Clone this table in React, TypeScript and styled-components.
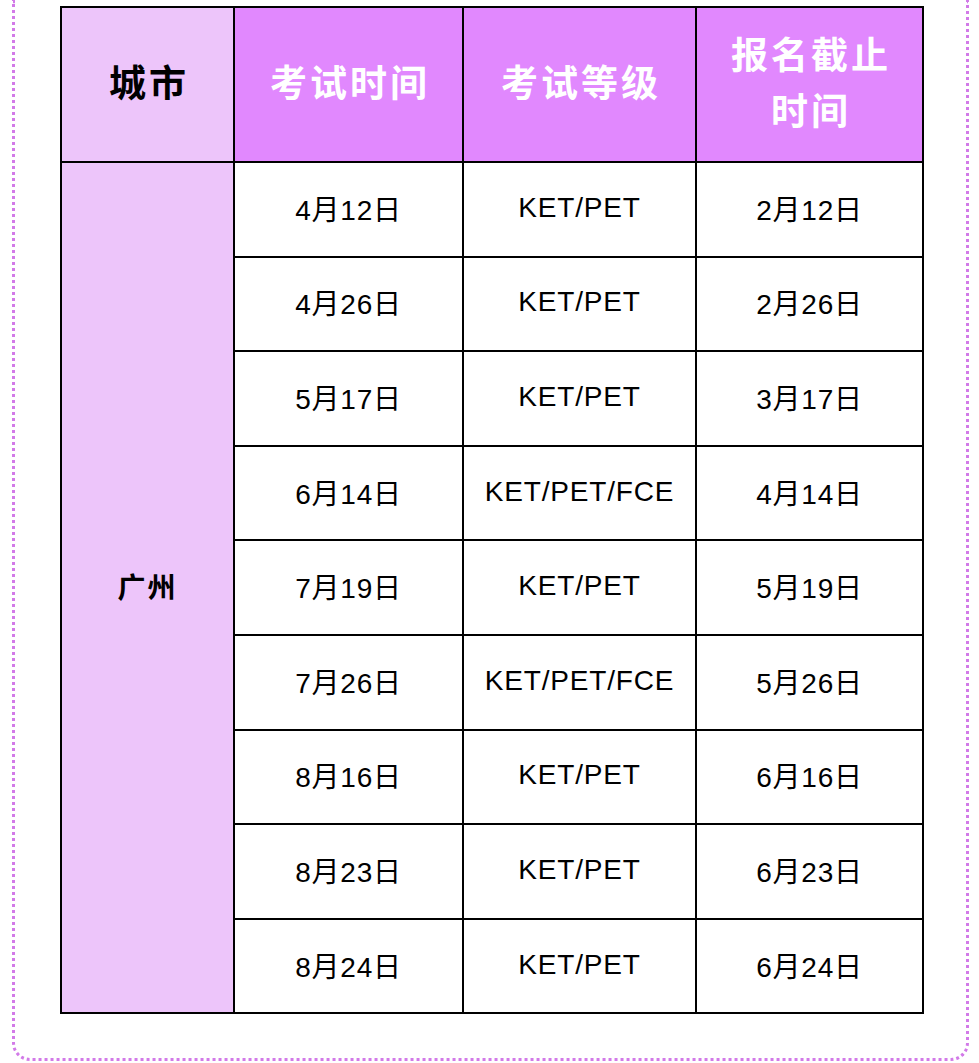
import React from "react";
import styled, { createGlobalStyle } from "styled-components";

const Global = createGlobalStyle`
  html, body { margin: 0; padding: 0; background: #ffffff; }
  body { font-family: "Liberation Sans", "Noto Sans CJK SC", Arial, sans-serif; }
`;

const Frame = styled.div`
  margin: 0 10px 0 12px;
  height: 1061px;
  box-sizing: border-box;
  border: 3px dotted #d27ae8;
  border-top: none;
  border-radius: 0 0 18px 18px;
  padding: 6px 44px 0 45px;
`;

const Table = styled.table`
  width: 862px;
  border-collapse: collapse;
  table-layout: fixed;
  border: 2px solid #000;
`;

const HeadRow = styled.tr`
  height: 155px;
`;

const BodyRow = styled.tr`
  height: 94.6px;
`;

const HeadCell = styled.th<{ $light?: boolean }>`
  border: 2px solid #000;
  background: ${(p) => (p.$light ? "#edc5fa" : "#e188fe")};
  color: ${(p) => (p.$light ? "#000" : "#fff")};
  font-size: 37px;
  font-weight: 700;
  letter-spacing: 3px;
  line-height: 56px;
  text-align: center;
  vertical-align: middle;
  padding: 0 0 0 3px;
`;

const CityCell = styled.td`
  border: 2px solid #000;
  background: #edc5fa;
  font-size: 28px;
  font-weight: 700;
  letter-spacing: 2px;
  text-align: center;
  vertical-align: middle;
  padding: 0 0 4px;
  color: #000;
`;

const Cell = styled.td`
  border: 2px solid #000;
  background: #fff;
  font-size: 28px;
  letter-spacing: 0.8px;
  text-align: center;
  vertical-align: middle;
  padding: 0 0 3px;
  color: #000;
`;

const rows = [
  ["4月12日", "KET/PET", "2月12日"],
  ["4月26日", "KET/PET", "2月26日"],
  ["5月17日", "KET/PET", "3月17日"],
  ["6月14日", "KET/PET/FCE", "4月14日"],
  ["7月19日", "KET/PET", "5月19日"],
  ["7月26日", "KET/PET/FCE", "5月26日"],
  ["8月16日", "KET/PET", "6月16日"],
  ["8月23日", "KET/PET", "6月23日"],
  ["8月24日", "KET/PET", "6月24日"],
];

export default function App() {
  return (
    <>
      <Global />
      <Frame>
        <Table>
          <colgroup>
            <col style={{ width: 173 }} />
            <col style={{ width: 229 }} />
            <col style={{ width: 233 }} />
            <col style={{ width: 227 }} />
          </colgroup>
          <thead>
            <HeadRow>
              <HeadCell $light>城市</HeadCell>
              <HeadCell>考试时间</HeadCell>
              <HeadCell>考试等级</HeadCell>
              <HeadCell>
                报名截止
                <br />
                时间
              </HeadCell>
            </HeadRow>
          </thead>
          <tbody>
            {rows.map((r, i) => (
              <BodyRow key={i}>
                {i === 0 && <CityCell rowSpan={rows.length}>广州</CityCell>}
                <Cell>{r[0]}</Cell>
                <Cell>{r[1]}</Cell>
                <Cell>{r[2]}</Cell>
              </BodyRow>
            ))}
          </tbody>
        </Table>
      </Frame>
    </>
  );
}
